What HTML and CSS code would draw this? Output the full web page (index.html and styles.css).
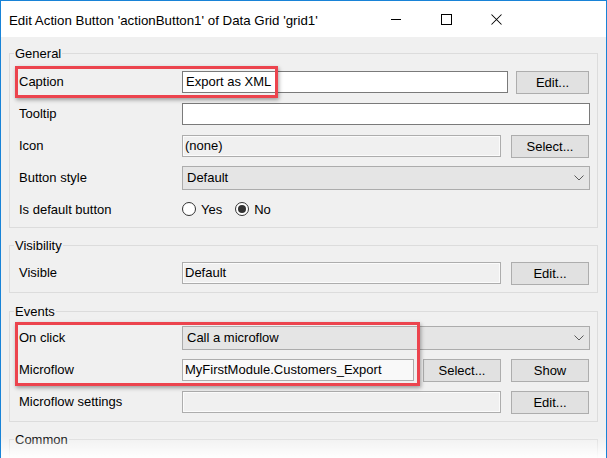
FILE: index.html
```html
<!DOCTYPE html>
<html>
<head>
<meta charset="utf-8">
<title>Edit Action Button</title>
<link rel="stylesheet" href="styles.css">
</head>
<body>
<div class="window">
  <div class="titlebar">
    <span class="title">Edit Action Button 'actionButton1' of Data Grid 'grid1'</span>
    <div class="caption-buttons">
      <span class="cb"><svg width="10" height="10" viewBox="0 0 10 10"><line x1="0" y1="5.5" x2="10" y2="5.5" stroke="#000" stroke-width="1"/></svg></span>
      <span class="cb"><svg width="11" height="11" viewBox="0 0 11 11"><rect x="0.5" y="0.5" width="10" height="10" fill="none" stroke="#000" stroke-width="1"/></svg></span>
      <span class="cb"><svg width="11" height="11" viewBox="0 0 11 11"><path d="M0.5 0.5 L10.5 10.5 M10.5 0.5 L0.5 10.5" stroke="#000" stroke-width="1.05" fill="none"/></svg></span>
    </div>
  </div>

  <div class="content">
    <fieldset class="group general">
      <legend>General</legend>
      <div class="row">
        <span class="lbl">Caption</span>
        <div class="field edit w-caption">Export as XML</div>
        <div class="btn btn-narrow">Edit...</div>
      </div>
      <div class="row">
        <span class="lbl">Tooltip</span>
        <div class="field edit w-full"></div>
      </div>
      <div class="row">
        <span class="lbl">Icon</span>
        <div class="field ro w-mid">(none)</div>
        <div class="btn">Select...</div>
      </div>
      <div class="row">
        <span class="lbl">Button style</span>
        <div class="combo w-full"><span>Default</span>
          <svg class="chev" width="10" height="6" viewBox="0 0 10 6"><polyline points="0.5,0.5 5,5 9.5,0.5" fill="none" stroke="#5a5a5a" stroke-width="1"/></svg>
        </div>
      </div>
      <div class="row row-radio">
        <span class="lbl">Is default button</span>
        <span class="radio"></span><span class="rtext">Yes</span>
        <span class="radio checked"></span><span class="rtext">No</span>
      </div>
    </fieldset>

    <fieldset class="group visibility">
      <legend>Visibility</legend>
      <div class="row">
        <span class="lbl">Visible</span>
        <div class="field ro w-mid">Default</div>
        <div class="btn">Edit...</div>
      </div>
    </fieldset>

    <fieldset class="group events">
      <legend>Events</legend>
      <div class="row">
        <span class="lbl">On click</span>
        <div class="combo w-full"><span>Call a microflow</span>
          <svg class="chev" width="10" height="6" viewBox="0 0 10 6"><polyline points="0.5,0.5 5,5 9.5,0.5" fill="none" stroke="#5a5a5a" stroke-width="1"/></svg>
        </div>
      </div>
      <div class="row">
        <span class="lbl">Microflow</span>
        <div class="field ro2 w-small">MyFirstModule.Customers_Export</div>
        <div class="btn">Select...</div>
        <div class="btn">Show</div>
      </div>
      <div class="row">
        <span class="lbl">Microflow settings</span>
        <div class="field ro w-mid"></div>
        <div class="btn">Edit...</div>
      </div>
    </fieldset>

    <fieldset class="group common">
      <legend>Common</legend>
      <div class="spacer"></div>
    </fieldset>
  </div>

  <div class="hl hl-caption"></div>
  <div class="hl hl-events"></div>
  <div class="fade"></div>
</div>
</body>
</html>
```

FILE: styles.css
```css
* { box-sizing: border-box; }
html, body { margin: 0; padding: 0; }
body {
  width: 607px;
  height: 458px;
  overflow: hidden;
  background: #fff;
  font-family: "Liberation Sans", Arial, sans-serif;
  font-size: 13px;
  color: #000;
}
.window {
  position: relative;
  width: 607px;
  height: 458px;
  border: 1px solid #1883d7;
  border-bottom: none;
  background: #f0f0f0;
  display: flex;
  flex-direction: column;
  overflow: hidden;
}
.titlebar {
  flex: none;
  height: 36px;
  background: #fff;
  display: flex;
  align-items: center;
}
.title {
  flex: 1;
  padding-left: 8px;
  font-size: 13.3px;
  white-space: nowrap;
  padding-top: 2px;
}
.caption-buttons {
  display: flex;
  padding-right: 85px;
}
.cb {
  width: 50px;
  height: 36px;
  display: flex;
  align-items: center;
  justify-content: center;
}
.cb svg { display: block; }

.content { padding-top: 9px; }

.group {
  margin: 0 8px;
  padding: 0 7px 8px 0;
  border: 1px solid #dcdcdc;
  min-width: 0;
  display: flex;
  flex-direction: column;
  gap: 9px;
}
.group legend {
  margin-left: 4px;
  padding: 0 1px;
  font-size: 13px;
  line-height: 15px;
}
.general { padding-top: 9px; padding-bottom: 9px; }
.visibility { margin-top: 10px; padding-top: 8px; padding-bottom: 8px; }
.events { margin-top: 11px; padding-top: 7px; padding-bottom: 8px; }
.common { margin-top: 10px; }
.spacer { height: 30px; }

.row {
  display: flex;
  align-items: center;
  padding-left: 9px;
  height: 23px;
}
.row-radio { height: 20px; padding-top: 2px; }
.lbl {
  flex: none;
  width: 163px;
  white-space: nowrap;
}
.field {
  flex: none;
  height: 22px;
  padding-left: 3px;
  line-height: 20px;
  white-space: nowrap;
  overflow: hidden;
}
.edit { background: #fff; border: 1px solid #7a7a7a; }
.ro {
  background: #f0f0f0;
  border: 1px solid #adadad;
  box-shadow: inset 0 0 0 1px #fbfbfb;
  padding-left: 2px;
}
.ro2 {
  background: #f9f9f9;
  border: 1px solid #adadad;
  padding-left: 2px;
}
.w-caption { width: 326px; }
.w-full { width: 408px; }
.w-mid { width: 319px; }
.w-small { width: 232px; }

.btn {
  flex: none;
  width: 78px;
  height: 23px;
  margin-left: 10px;
  background: #e1e1e1;
  border: 1px solid #adadad;
  text-align: center;
  line-height: 21px;
  margin-top: 1px;
}
.w-small + .btn { margin-left: 9px; }
.btn-narrow { width: 73px; margin-left: 8px; }

.combo {
  flex: none;
  height: 24px;
  background: #e5e5e5;
  border: 1px solid #acacac;
  padding-left: 4px;
  padding-right: 5px;
  display: flex;
  align-items: center;
  justify-content: space-between;
}
.chev { display: block; }

.radio {
  flex: none;
  width: 14px;
  height: 14px;
  border: 1px solid #333;
  border-radius: 50%;
  background: #fff;
  position: relative;
  margin-right: 5px;
}
.radio.checked::after {
  content: "";
  position: absolute;
  left: 2px;
  top: 2px;
  width: 8px;
  height: 8px;
  border-radius: 50%;
  background: #333;
}
.rtext { margin-right: 13px; }

.hl {
  position: absolute;
  left: 14px;
  border: 3px solid #ec444e;
  box-shadow: 1px 2px 4px rgba(0, 0, 0, 0.35);
  pointer-events: none;
}
.hl-caption { top: 65px; width: 263px; height: 32px; }
.hl-events { top: 321px; width: 405px; height: 64px; }

.fade {
  position: absolute;
  left: -1px;
  right: -1px;
  bottom: 0;
  height: 22px;
  background: linear-gradient(to bottom, rgba(255, 255, 255, 0), rgba(255, 255, 255, 0.95));
}
```
